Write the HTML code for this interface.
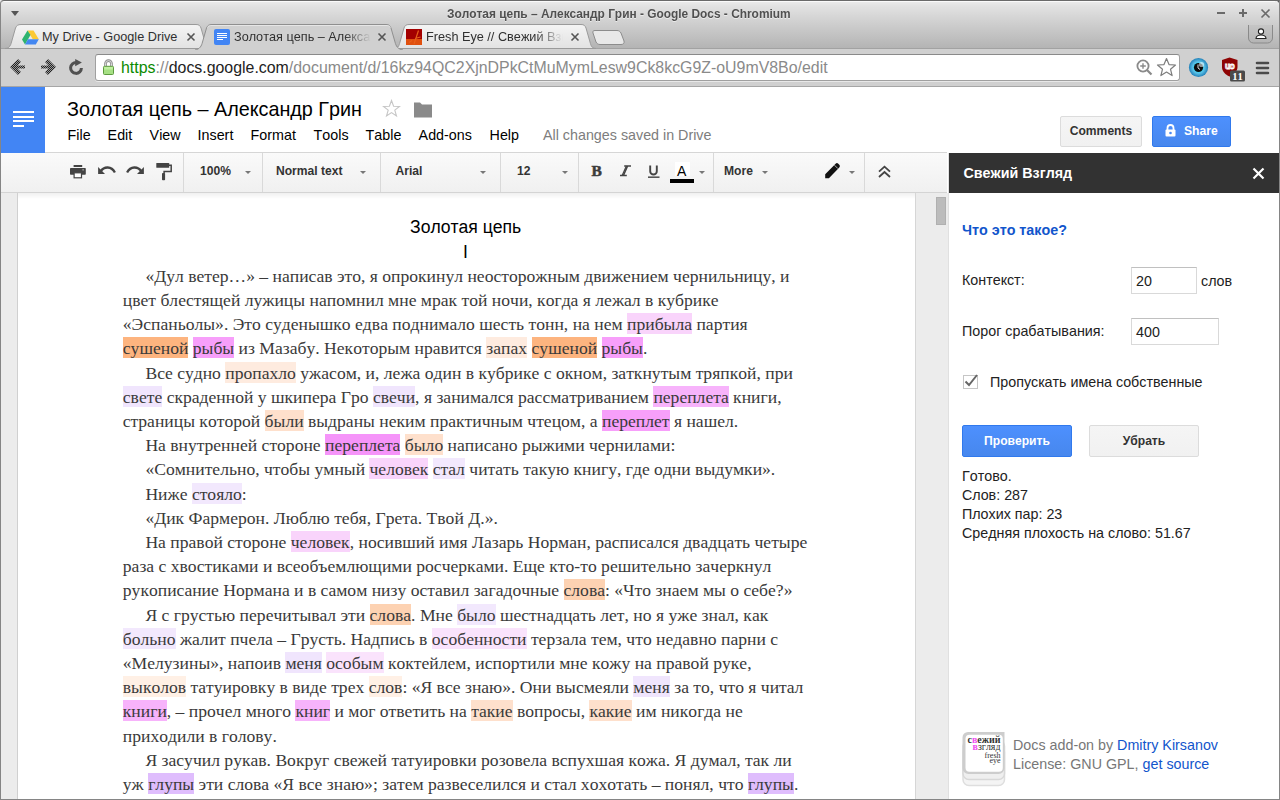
<!DOCTYPE html>
<html><head><meta charset="utf-8">
<style>
*{box-sizing:border-box;margin:0;padding:0;font-kerning:none!important}
html,body{width:1280px;height:800px;overflow:hidden;background:#fff;font-family:"Liberation Sans",sans-serif;font-kerning:none}
.a{position:absolute}
.t{position:absolute;white-space:pre;line-height:1}
/* chrome */
#frame{left:0;top:0;width:1280px;height:800px;border:1px solid #858585;border-top-color:#6a6a6a;border-radius:4px 0 0 0;pointer-events:none;z-index:50}
#titlebar{left:0;top:0;width:1280px;height:48px;background:linear-gradient(#ececec 1px,#e2e2e2 6px,#d0d0d0 22px,#b4b4b4 48px)}
#toolbar{left:0;top:48px;width:1280px;height:39px;background:#d0d0d0;border-top:1px solid #a2a2a2;border-bottom:1px solid #a6a6a6}
#omni{left:95px;top:54px;width:1085px;height:27px;background:#fff;border:1px solid #a0a0a0;border-top-color:#8a8a8a;border-radius:3px;box-shadow:0 1px 0 rgba(255,255,255,.5)}
.ttl{font:bold 13px "Liberation Sans",sans-serif;color:#505050;text-shadow:0 1px 0 rgba(255,255,255,.55);transform:scaleX(0.915);transform-origin:0 0}
.tabt{font:12.7px "Liberation Sans",sans-serif;color:#303030}
/* docs */
#logo{left:1px;top:87px;width:44px;height:66px;background:#4285f4;z-index:2}
#dtb{left:1px;top:152px;width:946px;height:41px;border-top:1px solid #d6d6d6;border-bottom:1px solid #d4d4d4;background:linear-gradient(#fafafa,#f0f0f0)}
.menu{font:14.3px "Liberation Sans",sans-serif;color:#000}
.tb{font:bold 12.1px "Liberation Sans",sans-serif;color:#333}
.sep{position:absolute;top:153px;width:1px;height:39px;background:#d9d9d9}
.arr{position:absolute;width:0;height:0;border-left:3px solid transparent;border-right:3px solid transparent;border-top:3px solid #777}
#gut{left:1px;top:193px;width:17px;height:606px;background:#ececec;border-right:1px solid #d0d0d0}
#rgut{left:915px;top:193px;width:34px;height:606px;background:#ececec;border-left:1px solid #d6d6d6}
#thumb{left:936px;top:197px;width:10px;height:28px;background:#bcbcbc;border:1px solid #b0b0b0}
.ln{position:absolute;white-space:pre;font:17.6px "Liberation Serif",serif;color:#3a3a3a;line-height:21px;height:21px}
.ln span{padding:1px 0 0}
.o0{background:#fff0e5}.o1{background:#feebdf}.o2{background:#fee0cc}.o3{background:#fdd2b2}.o4{background:#fdb47f}
.p0{background:#f2e8fd}.p1{background:#f0e5fd}.p3{background:#dfbdfd}
.m0{background:#fae3fc}.m1{background:#f9d4fb}.m2{background:#f7b3fb}.m3{background:#f79ffa}.m4{background:#f594f9}
/* sidebar */
#sb{left:949px;top:153px;width:330px;height:646px;background:#fff}
#sbh{left:949px;top:153px;width:330px;height:40px;background:#323232}
.sbt{font:14.3px "Liberation Sans",sans-serif;color:#222}
.btn{position:absolute;border-radius:2px;font:bold 12.1px "Liberation Sans",sans-serif;text-align:center}
.gray{background:linear-gradient(#f5f5f5,#f1f1f1);border:1px solid #dcdcdc;color:#333}
.blue{background:linear-gradient(#4d90fe,#4787ed);border:1px solid #3079ed;color:#fff}
.inp{position:absolute;border:1px solid #d9d9d9;border-top-color:#c0c0c0;background:#fff}
</style></head><body>

<!-- ============ BROWSER CHROME ============ -->
<div id="titlebar" class="a"></div>
<div class="a" style="left:3px;top:1px;width:1272px;height:1px;background:#fafafa"></div>
<svg class="a" style="left:1274px;top:0" width="6" height="6"><path d="M0 0H6V6C6 3 3 0 0 0Z" fill="#5a5a5a"/></svg>
<div class="a" style="left:11px;top:11px;width:0;height:0;border-left:4px solid transparent;border-right:4px solid transparent;border-top:5px solid #555"></div>
<div class="t ttl" style="left:447px;top:6px">Золотая цепь – Александр Грин - Google Docs - Chromium</div>
<!-- window controls -->
<div class="a" style="left:1217px;top:12px;width:8px;height:2px;background:#6a6a6a"></div>
<div class="a" style="left:1239px;top:12px;width:8px;height:2px;background:#6a6a6a"></div>
<div class="a" style="left:1242px;top:9px;width:2px;height:8px;background:#6a6a6a"></div>
<svg class="a" style="left:1260px;top:8px" width="11" height="11"><path d="M1.5 1.5L9.5 9.5M9.5 1.5L1.5 9.5" stroke="#6a6a6a" stroke-width="1.7"/></svg>
<!-- profile button -->
<svg class="a" style="left:1247px;top:25px" width="27" height="19"><path d="M1.5 0V13a5 5 0 0 0 5 5H20.5a5 5 0 0 0 5-5V0" fill="rgba(0,0,0,0.03)" stroke="#8a8a8a" stroke-width="1"/><circle cx="14" cy="6.5" r="2.6" fill="#fff" stroke="#222" stroke-width="1.1"/><path d="M9 13.5a5 3.5 0 0 1 10 0z" fill="#fff" stroke="#222" stroke-width="1.1"/></svg>

<!-- toolbar -->
<div id="toolbar" class="a"></div>
<!-- tabs -->
<svg class="a" style="left:0;top:23px" width="640" height="27">
  <defs>
    <linearGradient id="tg" x1="0" y1="0" x2="0" y2="1"><stop offset="0" stop-color="#f4f4f4"/><stop offset="1" stop-color="#e2e2e2"/></linearGradient>
  </defs>
  <path d="M5 25.5 C9 25.5 10.5 23 11.5 19 L15.5 5 C16.5 2.5 18 1.5 21 1.5 L196 1.5 C199 1.5 200 2.5 201 5 L205 19 C206 23 207 25.5 211 25.5Z" fill="url(#tg)" stroke="#9a9a9a" stroke-width="1"/>
  <path d="M394 25.5 C398 25.5 399 23 400 19 L404 5 C405 2.5 406 1.5 409 1.5 L581 1.5 C584 1.5 585 2.5 586 5 L590 19 C591 23 592 25.5 596 25.5Z" fill="url(#tg)" stroke="#9a9a9a" stroke-width="1"/>
  <path d="M595 7.5 L617 7.5 C619 7.5 620 8.5 621 10 L624 18 C624.5 20 623.5 21.5 621 21.5 L600 21.5 C598 21.5 597 20.5 596 19 L593 10 C592.5 8.5 593 7.5 595 7.5Z" fill="#e8e8e8" stroke="#8c8c8c" stroke-width="1"/>
  <path d="M195 27 C200 26 201.5 23 202.5 19 L206.5 5 C207.5 2.5 209 1.5 212 1.5 L386 1.5 C389 1.5 390 2.5 391 5 L395 19 C396 23 397.5 26 403 27" fill="#d0d0d0" stroke="#8f8f8f" stroke-width="1"/>
  <path d="M207.5 4.5 C208.5 2.8 210 2.5 212 2.5 L386 2.5 C388 2.5 389.5 2.8 390.5 4.5" fill="none" stroke="#e6e6e6" stroke-width="1"/>
</svg>
<!-- tab icons -->
<svg class="a" style="left:22px;top:29.5px" width="17" height="15"><path d="M5.5 0.5H11.5L16.8 9.3H10.8Z" fill="#fcc934"/><path d="M5.5 0.5L0 9.5L3 14.5L8.5 5Z" fill="#2eb36e"/><path d="M3 14.5H13.8L16.8 9.3H6Z" fill="#4387f1"/></svg>
<div class="t tabt" style="left:42px;top:30px">My Drive - Google Drive</div>
<svg class="a" style="left:186px;top:32px" width="10" height="10"><path d="M1.5 1.5L8.5 8.5M8.5 1.5L1.5 8.5" stroke="#555" stroke-width="1.6"/></svg>
<div class="a" style="left:214px;top:29px;width:16px;height:16px;background:#4285f4;border-radius:2px"></div>
<div class="a" style="left:217px;top:33px;width:10px;height:1px;background:#fff"></div>
<div class="a" style="left:217px;top:35px;width:10px;height:1px;background:#fff"></div>
<div class="a" style="left:217px;top:37px;width:10px;height:1px;background:#fff"></div>
<div class="a" style="left:217px;top:39px;width:6px;height:1px;background:#fff"></div>
<div class="t tabt" style="left:234px;top:30px;width:137px;overflow:hidden;-webkit-mask-image:linear-gradient(90deg,#000 80%,transparent)">Золотая цепь – Александр Грин</div>
<svg class="a" style="left:377px;top:32px" width="10" height="10"><path d="M1.5 1.5L8.5 8.5M8.5 1.5L1.5 8.5" stroke="#555" stroke-width="1.6"/></svg>
<svg class="a" style="left:406px;top:29px" width="16" height="16"><rect width="16" height="16" fill="#a30000"/><rect y="10" width="16" height="6" fill="#e0500f"/><path d="M12.5 1.5L8 15M9 9.5L14.5 8M3 13.5L6 11.5" stroke="#e8601a" stroke-width="1.2"/></svg>
<div class="t tabt" style="left:426px;top:30px;width:137px;overflow:hidden;-webkit-mask-image:linear-gradient(90deg,#000 80%,transparent)">Fresh Eye // Свежий Взгляд</div>
<svg class="a" style="left:570px;top:32px" width="10" height="10"><path d="M1.5 1.5L8.5 8.5M8.5 1.5L1.5 8.5" stroke="#555" stroke-width="1.6"/></svg>

<svg class="a" style="left:9px;top:58px" width="90" height="19">
  <defs><pattern id="chk" width="2" height="2" patternUnits="userSpaceOnUse"><rect width="2" height="2" fill="#9a9a9a"/><rect width="1" height="1" fill="#222"/><rect x="1" y="1" width="1" height="1" fill="#222"/></pattern></defs>
  <path d="M1 9L9 1L12 4L8.5 7.5H16V10.5H8.5L12 14L9 17Z" fill="url(#chk)"/>
  <path d="M47 9L39 1L36 4L39.5 7.5H32V10.5H39.5L36 14L39 17Z" fill="url(#chk)"/>
  <path d="M72.4 10A5.4 5.4 0 1 1 67.5 4.6" fill="none" stroke="#505050" stroke-width="3"/>
  <path d="M66.2 0.9L72.9 4.6L66.2 8.3Z" fill="#505050"/>
</svg>
<div id="omni" class="a"></div>
<svg class="a" style="left:102px;top:59px" width="13" height="17"><path d="M3.5 7V4.6a3 3 0 0 1 6 0V7" fill="none" stroke="#8a8a8a" stroke-width="2.6"/><path d="M3.5 7V4.6a3 3 0 0 1 6 0V7" fill="none" stroke="#e8e8e8" stroke-width="0.9"/><rect x="1.5" y="7.3" width="10" height="8.2" rx="1" fill="#a6e084" stroke="#5d9a3f" stroke-width="1"/><rect x="2.2" y="8" width="8.6" height="2.5" fill="#c0f0a0"/></svg>
<div class="t" style="left:121px;top:59px;font:15.9px 'Liberation Sans',sans-serif;color:#8a8a8a"><span style="color:#0b8a00">https</span>://<span style="color:#222">docs.google.com</span>/document/d/16kz94QC2XjnDPkCtMuMymLesw9Ck8kcG9Z-oU9mV8Bo/edit</div>
<svg class="a" style="left:1136px;top:59px" width="18" height="17"><circle cx="7" cy="7" r="5.6" fill="none" stroke="#8a8a8a" stroke-width="1.8"/><path d="M11 11L15.5 15.5" stroke="#8a8a8a" stroke-width="2.2"/><path d="M7 4.2V9.8M4.2 7H9.8" stroke="#8a8a8a" stroke-width="1.4"/></svg>
<svg class="a" style="left:1156px;top:57px" width="21" height="20"><path d="M10.5 1.5L13 7.6L19.5 8L14.5 12.2L16.1 18.6L10.5 15.1L4.9 18.6L6.5 12.2L1.5 8L8 7.6Z" fill="#fff" stroke="#7d7d7d" stroke-width="1.2" stroke-linejoin="round"/></svg>
<svg class="a" style="left:1188px;top:57px" width="22" height="22"><defs><radialGradient id="eg" cx=".5" cy=".5" r=".5"><stop offset=".45" stop-color="#2fd3f2"/><stop offset=".6" stop-color="#5cc0e6"/><stop offset="1" stop-color="#1f7fb8"/></radialGradient></defs><circle cx="10.5" cy="10.5" r="9.6" fill="url(#eg)"/><circle cx="10.5" cy="10.5" r="4.6" fill="#0c0c0c"/><path d="M10 7.5V11L12 12.5" stroke="#e0e0e0" stroke-width="1" fill="none"/><circle cx="13.5" cy="7.5" r="2.6" fill="#fff" opacity=".55"/></svg>
<svg class="a" style="left:1221px;top:57px" width="26" height="26"><path d="M1 3L8.5 0.5L16.5 3V10C16.5 14 13 17.5 8.5 19.5C4 17.5 1 14 1 10Z" fill="#8e0404"/><text x="8.6" y="11.6" text-anchor="middle" font-family="Liberation Sans" font-size="8.5" font-weight="bold" fill="none" stroke="#fff" stroke-width="0.9" letter-spacing="-0.5">uo</text><rect x="9" y="13.5" width="15" height="11" rx="1.5" fill="#4a4a4a"/><text x="11.2" y="22.8" font-family="Liberation Serif" font-size="10.5" font-weight="bold" fill="#fff">11</text></svg>
<svg class="a" style="left:1255px;top:61px" width="15" height="14"><path d="M2 2H13M2 7H13M2 12H13" stroke="#4a4a4a" stroke-width="2.6" stroke-linecap="round"/></svg>

<!-- ============ DOCS HEADER ============ -->
<div id="logo" class="a"></div>
<div class="a" style="z-index:3;left:13px;top:111px;width:21px;height:2.4px;background:#fff"></div>
<div class="a" style="z-index:3;left:13px;top:115.5px;width:21px;height:2.4px;background:#fff"></div>
<div class="a" style="z-index:3;left:13px;top:120px;width:21px;height:2.4px;background:#fff"></div>
<div class="a" style="z-index:3;left:13px;top:124.5px;width:11px;height:2.4px;background:#fff"></div>
<div class="t" style="left:67px;top:98px;font:19.8px 'Liberation Sans',sans-serif;color:#000">Золотая цепь – Александр Грин</div>
<svg class="a" style="left:382px;top:99px" width="19" height="19"><path d="M9.5 1.5L11.6 7.2L17.5 7.4L12.8 11.1L14.5 17L9.5 13.6L4.5 17L6.2 11.1L1.5 7.4L7.4 7.2Z" fill="none" stroke="#c6c6c6" stroke-width="1.1"/></svg>
<svg class="a" style="left:413px;top:100.5px" width="20" height="18"><path d="M1 1.5H7L9 3.5H19V16.5H1Z" fill="#8a8a8a"/></svg>
<div class="t menu" style="left:67.6px;top:127px">File</div>
<div class="t menu" style="left:107.6px;top:127px">Edit</div>
<div class="t menu" style="left:149.6px;top:127px">View</div>
<div class="t menu" style="left:197.6px;top:127px">Insert</div>
<div class="t menu" style="left:250.6px;top:127px">Format</div>
<div class="t menu" style="left:313.6px;top:127px">Tools</div>
<div class="t menu" style="left:365.6px;top:127px">Table</div>
<div class="t menu" style="left:418.6px;top:127px">Add-ons</div>
<div class="t menu" style="left:489.6px;top:127px">Help</div>
<div class="t menu" style="left:543px;top:127px;color:#7d7d7d">All changes saved in Drive</div>

<div class="btn gray" style="left:1060px;top:116px;width:82px;height:31px;line-height:29px">Comments</div>
<div class="btn blue" style="left:1152px;top:116px;width:79px;height:31px;line-height:29px;text-align:left;padding-left:31px">Share</div>
<svg class="a" style="left:1165px;top:124px" width="11" height="13"><path d="M2.5 6V4a3 3 0 0 1 6 0V6" fill="none" stroke="#fff" stroke-width="1.8"/><rect x="0.5" y="5.5" width="10" height="7" rx="1" fill="#fff"/><circle cx="5.5" cy="9" r="1.3" fill="#4a8af4"/></svg>

<!-- docs toolbar -->
<div id="dtb" class="a"></div>
<svg class="a" style="left:66px;top:158px" width="24" height="24"><rect x="7.6" y="7" width="8.6" height="2" fill="#444"/><rect x="4" y="9.9" width="15.8" height="6.8" rx="0.8" fill="#444"/><rect x="8.1" y="14.8" width="7.4" height="5" fill="#fff" stroke="#444" stroke-width="1.2"/><rect x="16.4" y="11" width="1.4" height="1.6" fill="#999"/></svg>
<svg class="a" style="left:96px;top:164px" width="21" height="13"><path d="M4.5 7.5C8 2.2 15.5 1.8 18.9 8.6" fill="none" stroke="#444" stroke-width="2.3"/><path d="M2.1 3.1V10H9Z" fill="#444"/></svg>
<svg class="a" style="left:126px;top:164px" width="21" height="13"><path d="M15.5 7.5C12 2.2 4.5 1.8 1.1 8.6" fill="none" stroke="#444" stroke-width="2.3"/><path d="M17.9 3.1V10H11Z" fill="#444"/></svg>
<svg class="a" style="left:154px;top:161px" width="20" height="21"><rect x="2.3" y="1.9" width="12.9" height="4.9" rx="0.6" fill="#444"/><path d="M15 4.2H17.2V10.6H10.1V12.5" fill="none" stroke="#444" stroke-width="1.5"/><rect x="8" y="12" width="3.1" height="7.3" rx="0.8" fill="#444"/></svg>
<div class="sep" style="left:183px"></div>
<div class="t tb" style="left:200px;top:164px">100%</div>
<div class="arr" style="left:245px;top:171px"></div>
<div class="sep" style="left:262px"></div>
<div class="t tb" style="left:276px;top:164px">Normal text</div>
<div class="arr" style="left:360px;top:171px"></div>
<div class="sep" style="left:380px"></div>
<div class="t tb" style="left:395.5px;top:164px">Arial</div>
<div class="arr" style="left:480px;top:171px"></div>
<div class="sep" style="left:500px"></div>
<div class="t tb" style="left:517px;top:164px">12</div>
<div class="arr" style="left:562px;top:171px"></div>
<div class="sep" style="left:578px"></div>
<div class="t" style="left:591.5px;top:161.8px;font:bold 15.5px 'Liberation Serif',serif;color:#3c3c3c;-webkit-text-stroke:0.5px #3c3c3c">B</div>
<svg class="a" style="left:619px;top:165px" width="14" height="12"><path d="M5.2 0.9H12M1 10.5H7.8M8.6 0.9L4.4 10.5" fill="none" stroke="#444" stroke-width="1.5"/><path d="M7.4 1L3.2 10.4" stroke="#444" stroke-width="1.3"/></svg>
<svg class="a" style="left:647px;top:165px" width="14" height="14"><path d="M3.2 0.5V6.2A3.3 3.3 0 0 0 9.8 6.2V0.5" fill="none" stroke="#444" stroke-width="1.9"/><rect x="1" y="11.4" width="11.5" height="1.6" fill="#555"/></svg>
<div class="a" style="left:675px;top:162px;width:15px;height:14px;background:#fff"></div>
<div class="t" style="left:677px;top:163px;font:14px 'Liberation Sans',sans-serif;color:#000">A</div>
<div class="a" style="left:670px;top:179px;width:24px;height:4px;background:#000"></div>
<div class="arr" style="left:699px;top:171px"></div>
<div class="sep" style="left:713px"></div>
<div class="t tb" style="left:724px;top:164px">More</div>
<div class="arr" style="left:762px;top:171px"></div>
<svg class="a" style="left:823px;top:162px" width="19" height="18"><path d="M2.2 16.2V12.2L12.6 1.8a1.9 1.9 0 0 1 2.7 0l1 1a1.9 1.9 0 0 1 0 2.7L5.9 16.2Z" fill="#111"/><path d="M11.5 3.2L14.9 6.6" stroke="#f1f1f1" stroke-width="0.7"/></svg>
<div class="arr" style="left:849px;top:171px"></div>
<div class="sep" style="left:864px"></div>
<svg class="a" style="left:877px;top:164px" width="15" height="15"><path d="M2 7.6L7.5 2.6L13 7.6M2 13L7.5 8L13 13" fill="none" stroke="#444" stroke-width="1.8"/></svg>

<!-- ============ DOCUMENT ============ -->
<div id="gut" class="a"></div>
<div id="rgut" class="a"></div>
<div id="thumb" class="a"></div>
<div class="a" style="left:18px;top:193px;width:897px;height:6px;background:linear-gradient(rgba(0,0,0,.06),rgba(0,0,0,0))"></div>
<div class="t" style="left:410px;top:217px;font:17.6px 'Liberation Sans',sans-serif;color:#000">Золотая цепь</div>
<div class="t" style="left:463px;top:242px;font:17.6px 'Liberation Sans',sans-serif;color:#000">I</div>

<div id="doc">
<div class="ln" style="left:145.40px;top:266px">«Дул ветер…» – написав это, я опрокинул неосторожным движением чернильницу, и</div>
<div class="ln" style="left:122.80px;top:290px">цвет блестящей лужицы напомнил мне мрак той ночи, когда я лежал в кубрике</div>
<div class="ln" style="left:122.80px;top:314px">«Эспаньолы». Это суденышко едва поднимало шесть тонн, на нем <span class="m1">прибыла</span> партия</div>
<div class="ln" style="left:122.80px;top:338px"><span class="o4">сушеной</span> <span class="m3">рыбы</span> из Мазабу. Некоторым нравится <span class="o1">запах</span> <span class="o4">сушеной</span> <span class="m3">рыбы</span>.</div>
<div class="ln" style="left:145.40px;top:363px">Все судно <span class="o1">пропахло</span> ужасом, и, лежа один в кубрике с окном, заткнутым тряпкой, при</div>
<div class="ln" style="left:122.80px;top:387px"><span class="p1">свете</span> скраденной у шкипера Гро <span class="p1">свечи</span>, я занимался рассматриванием <span class="m2">переплета</span> книги,</div>
<div class="ln" style="left:122.80px;top:411px">страницы которой <span class="o2">были</span> выдраны неким практичным чтецом, а <span class="m3">переплет</span> я нашел.</div>
<div class="ln" style="left:145.40px;top:435px">На внутренней стороне <span class="m4">переплета</span> <span class="o2">было</span> написано рыжими чернилами:</div>
<div class="ln" style="left:145.40px;top:459px">«Сомнительно, чтобы умный <span class="m1">человек</span> <span class="p0">стал</span> читать такую книгу, где одни выдумки».</div>
<div class="ln" style="left:145.40px;top:484px">Ниже <span class="p0">стояло</span>:</div>
<div class="ln" style="left:145.40px;top:508px">«Дик Фармерон. Люблю тебя, Грета. Твой Д.».</div>
<div class="ln" style="left:145.40px;top:532px">На правой стороне <span class="m1">человек</span>, носивший имя Лазарь Норман, расписался двадцать четыре</div>
<div class="ln" style="left:122.80px;top:556px">раза с хвостиками и всеобъемлющими росчерками. Еще кто-то решительно зачеркнул</div>
<div class="ln" style="left:122.80px;top:580px">рукописание Нормана и в самом низу оставил загадочные <span class="o3">слова</span>: «Что знаем мы о себе?»</div>
<div class="ln" style="left:145.40px;top:605px">Я с грустью перечитывал эти <span class="o3">слова</span>. Мне <span class="p0">было</span> шестнадцать лет, но я уже знал, как</div>
<div class="ln" style="left:122.80px;top:629px"><span class="p0">больно</span> жалит пчела – Грусть. Надпись в <span class="m0">особенности</span> терзала тем, что недавно парни с</div>
<div class="ln" style="left:122.80px;top:653px">«Мелузины», напоив <span class="p1">меня</span> <span class="m0">особым</span> коктейлем, испортили мне кожу на правой руке,</div>
<div class="ln" style="left:122.80px;top:677px"><span class="o0">выколов</span> татуировку в виде трех <span class="o0">слов</span>: «Я все знаю». Они высмеяли <span class="p1">меня</span> за то, что я читал</div>
<div class="ln" style="left:122.80px;top:701px"><span class="m2">книги</span>, – прочел много <span class="m2">книг</span> и мог ответить на <span class="o2">такие</span> вопросы, <span class="o2">какие</span> им никогда не</div>
<div class="ln" style="left:122.80px;top:726px">приходили в голову.</div>
<div class="ln" style="left:145.40px;top:750px">Я засучил рукав. Вокруг свежей татуировки розовела вспухшая кожа. Я думал, так ли</div>
<div class="ln" style="left:122.80px;top:774px">уж <span class="p3">глупы</span> эти слова «Я все знаю»; затем развеселился и стал хохотать – понял, что <span class="p3">глупы</span>.</div>
<!--DOCEND-->
</div>

<!-- ============ SIDEBAR ============ -->
<div id="sb" class="a"></div>
<div id="sbh" class="a"></div>
<div class="a" style="left:948px;top:153px;width:1px;height:646px;background:#e0e0e0"></div>
<div class="t" style="left:963.5px;top:165px;font:bold 14.3px 'Liberation Sans',sans-serif;color:#fff">Свежий Взгляд</div>
<svg class="a" style="left:1252px;top:167px" width="13" height="13"><path d="M1.5 1.5L11.5 11.5M11.5 1.5L1.5 11.5" stroke="#fff" stroke-width="2.2"/></svg>
<div class="t" style="left:962px;top:222px;font:bold 14.3px 'Liberation Sans',sans-serif;color:#1155cc">Что это такое?</div>
<div class="t sbt" style="left:962px;top:272px">Контекст:</div>
<div class="inp" style="left:1131px;top:267px;width:66px;height:27px"></div>
<div class="t sbt" style="left:1136px;top:273px">20</div>
<div class="t sbt" style="left:1201px;top:273px">слов</div>
<div class="t sbt" style="left:962px;top:323px">Порог срабатывания:</div>
<div class="inp" style="left:1131px;top:318px;width:88px;height:27px"></div>
<div class="t sbt" style="left:1136px;top:324px">400</div>
<div class="a" style="left:963px;top:375px;width:15px;height:14px;border:1px solid #c6c6c6;background:#fff"></div>
<svg class="a" style="left:962px;top:371px" width="18" height="18"><path d="M3.5 10.5L7 14L15 4" fill="none" stroke="#666" stroke-width="2"/></svg>
<div class="t sbt" style="left:990px;top:374px">Пропускать имена собственные</div>
<div class="btn blue" style="left:962px;top:425px;width:110px;height:32px;line-height:30px">Проверить</div>
<div class="btn gray" style="left:1089px;top:425px;width:110px;height:32px;line-height:30px">Убрать</div>
<div class="t sbt" style="left:962px;top:468px">Готово.</div>
<div class="t sbt" style="left:962px;top:487px">Слов: 287</div>
<div class="t sbt" style="left:962px;top:506px">Плохих пар: 23</div>
<div class="t sbt" style="left:962px;top:525px">Средняя плохость на слово: 51.67</div>

<!-- footer logo -->
<svg class="a" style="left:962px;top:731px" width="44" height="56">
  <rect x="1" y="15" width="41.5" height="39.5" rx="6" fill="#f4f4f4" stroke="#dedede" stroke-width="1.5"/>
  <rect x="1" y="9" width="41.5" height="39.5" rx="6" fill="#efefef" stroke="#d8d8d8" stroke-width="1.5"/>
  <path d="M6 1H42.5V37a6 6 0 0 1-6 6H6.5a6 6 0 0 1-6-6V6.5A5.5 5.5 0 0 1 6 1Z" fill="#cdcdcd"/>
  <rect x="3.5" y="3.7" width="37.3" height="37" rx="4" fill="#fff"/>
  <text x="38.5" y="12" text-anchor="end" font-family="Liberation Serif" font-size="10.4" font-weight="bold" fill="#333" textLength="33" lengthAdjust="spacingAndGlyphs">с<tspan fill="#f050f0">в</tspan>ежий</text>
  <text x="38.5" y="18.5" text-anchor="end" font-family="Liberation Serif" font-size="10" fill="#333" textLength="28" lengthAdjust="spacingAndGlyphs"><tspan fill="#f050f0" font-weight="bold">в</tspan>згляд</text>
  <text x="38.5" y="27" text-anchor="end" font-family="Liberation Serif" font-size="8" fill="#333">fresh</text>
  <text x="38.5" y="32" text-anchor="end" font-family="Liberation Serif" font-size="8" fill="#333">eye</text>
</svg>
<div class="t sbt" style="left:1013px;top:736.5px;color:#777">Docs add-on by <span style="color:#1155cc">Dmitry Kirsanov</span></div>
<div class="t sbt" style="left:1013px;top:755.5px;color:#777">License: GNU GPL, <span style="color:#1155cc">get source</span></div>

<div id="frame" class="a"></div>
</body></html>
